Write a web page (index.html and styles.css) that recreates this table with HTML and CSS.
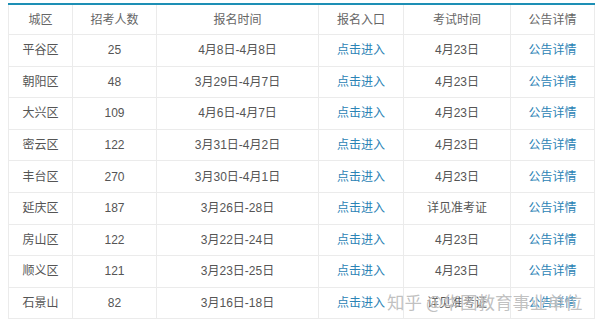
FILE: index.html
```html
<!DOCTYPE html>
<html>
<head>
	<meta charset="utf-8">
	<title>招考信息</title>
	<link rel="stylesheet" href="styles.css">
</head>
<body>
	<div class="wrap">
		<table class="exam_table">
			<colgroup>
				<col class="c_area"><col class="c_num"><col class="c_date"><col class="c_entry"><col class="c_exam"><col class="c_notice">
			</colgroup>
			<tr>
				<th>城区</th><th>招考人数</th><th>报名时间</th><th>报名入口</th><th>考试时间</th><th>公告详情</th>
			</tr>
			<tr>
				<td>平谷区</td><td>25</td><td>4月8日-4月8日</td><td><a href="#">点击进入</a></td><td>4月23日</td><td><a href="#">公告详情</a></td>
			</tr>
			<tr>
				<td>朝阳区</td><td>48</td><td>3月29日-4月7日</td><td><a href="#">点击进入</a></td><td>4月23日</td><td><a href="#">公告详情</a></td>
			</tr>
			<tr>
				<td>大兴区</td><td>109</td><td>4月6日-4月7日</td><td><a href="#">点击进入</a></td><td>4月23日</td><td><a href="#">公告详情</a></td>
			</tr>
			<tr>
				<td>密云区</td><td>122</td><td>3月31日-4月2日</td><td><a href="#">点击进入</a></td><td>4月23日</td><td><a href="#">公告详情</a></td>
			</tr>
			<tr>
				<td>丰台区</td><td>270</td><td>3月30日-4月1日</td><td><a href="#">点击进入</a></td><td>4月23日</td><td><a href="#">公告详情</a></td>
			</tr>
			<tr>
				<td>延庆区</td><td>187</td><td>3月26日-28日</td><td><a href="#">点击进入</a></td><td>详见准考证</td><td><a href="#">公告详情</a></td>
			</tr>
			<tr>
				<td>房山区</td><td>122</td><td>3月22日-24日</td><td><a href="#">点击进入</a></td><td>4月23日</td><td><a href="#">公告详情</a></td>
			</tr>
			<tr>
				<td>顺义区</td><td>121</td><td>3月23日-25日</td><td><a href="#">点击进入</a></td><td>4月23日</td><td><a href="#">公告详情</a></td>
			</tr>
			<tr>
				<td>石景山</td><td>82</td><td>3月16日-18日</td><td><a href="#">点击进入</a></td><td>详见准考证</td><td><a href="#">公告详情</a></td>
			</tr>
		</table>
		<div class="watermark">知乎 @华图教育事业单位</div>
	</div>
</body>
</html>
```

FILE: styles.css
```css
*{
	margin: 0px;
	padding: 0px;
}
body
{
	background-color: #fff;
	font-family: "Liberation Sans", "Noto Sans CJK SC", sans-serif;
	font-size: 12px;
	color: #555;
}
.wrap
{
	position: relative;
	padding: 3px 0px 0px 8px;
	width: 586px;
}
.exam_table
{
	width: 586px;
	border-collapse: collapse;
	table-layout: fixed;
	border-top: 2px solid #1d8fb5;
}
.c_area { width: 64px; }
.c_num { width: 84px; }
.c_date { width: 162px; }
.c_entry { width: 85px; }
.c_exam { width: 107px; }
.c_notice { width: 84px; }
th, td
{
	border: 1px solid #ebebeb;
	text-align: center;
	vertical-align: middle;
	font-weight: normal;
	height: 30.6px;
	line-height: 14px;
	color: #555;
}
th
{
	height: 29px;
	border-top: none;
	color: #666;
}
td a
{
	color: #2b83b5;
	text-decoration: none;
}
.watermark
{
	position: absolute;
	left: 387px;
	top: 290px;
	font-family: "Noto Sans CJK SC", sans-serif;
	font-size: 17.5px;
	line-height: 24px;
	white-space: nowrap;
	color: rgba(140, 140, 140, 0.55);
	text-shadow: 0px 0px 1px rgba(255, 255, 255, 0.9);
}
```
